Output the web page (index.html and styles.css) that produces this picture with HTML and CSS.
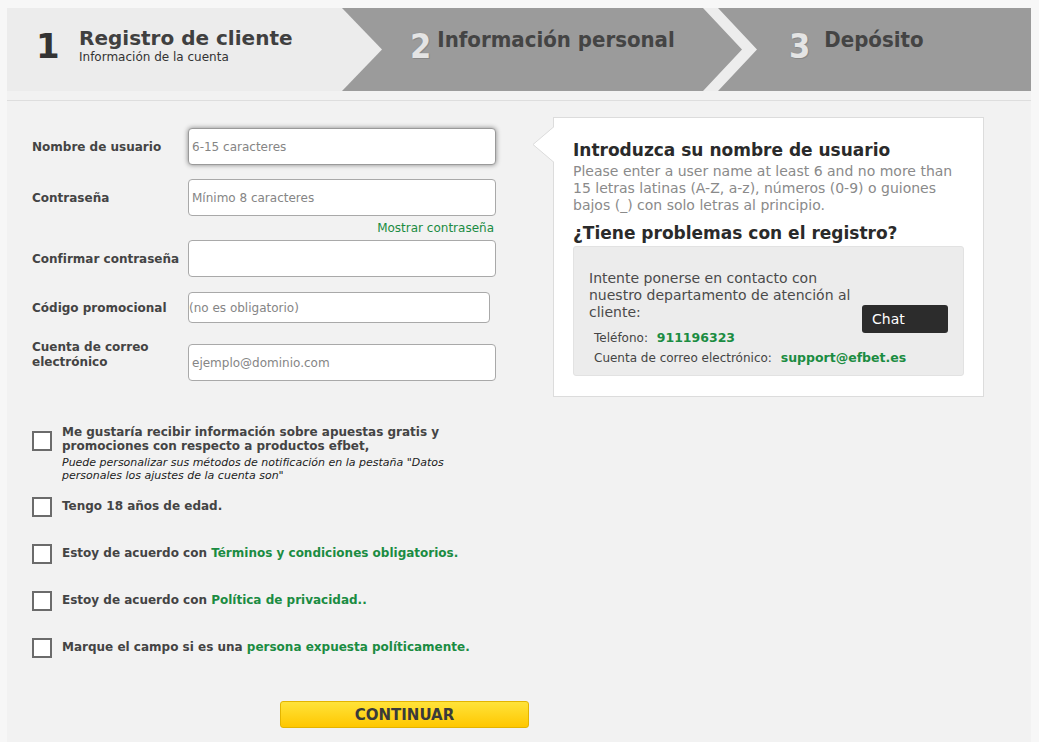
FILE: index.html
```html
<!DOCTYPE html>
<html lang="es">
<head>
<meta charset="utf-8">
<title>Registro de cliente</title>
<link rel="stylesheet" href="styles.css">
</head>
<body>
<div class="page">
  <header class="steps">
    <div class="step step1">
      <span class="num1">1</span>
      <div class="titles">
        <div class="title1">Registro de cliente</div>
        <div class="sub1">Información de la cuenta</div>
      </div>
    </div>
    <div class="step step2">
      <span class="numc">2</span>
      <span class="titlec">Información personal</span>
    </div>
    <svg class="sep" width="54" height="83" viewBox="0 0 54 83"><polygon points="0,0 15,0 54,41.5 15,83 0,83 39,41.5" fill="#ededed"/></svg>
    <div class="step step3">
      <span class="numc">3</span>
      <span class="titlec">Depósito</span>
    </div>
  </header>
  <div class="rule"></div>
  <main class="content">
    <div class="left">
      <form class="form">
        <div class="row r1">
          <label class="lbl">Nombre de usuario</label>
          <input class="inp focus" type="text" placeholder="6-15 caracteres">
        </div>
        <div class="row r2">
          <label class="lbl">Contraseña</label>
          <input class="inp" type="text" placeholder="Mínimo 8 caracteres">
        </div>
        <div class="show"><span class="link">Mostrar contraseña</span></div>
        <div class="row r3">
          <label class="lbl">Confirmar contraseña</label>
          <input class="inp" type="text">
        </div>
        <div class="row r4">
          <label class="lbl">Código promocional</label>
          <input class="inp short" type="text" placeholder="(no es obligatorio)">
        </div>
        <div class="row r5">
          <label class="lbl top">Cuenta de correo<br>electrónico</label>
          <input class="inp" type="text" placeholder="ejemplo@dominio.com">
        </div>
      </form>
      <div class="checks">
        <div class="cb first">
          <span class="box"></span>
          <div class="cbtext">
            <div>Me gustaría recibir información sobre apuestas gratis y<br>promociones con respecto a productos efbet,</div>
            <div class="note">Puede personalizar sus métodos de notificación en la pestaña "Datos<br>personales los ajustes de la cuenta son"</div>
          </div>
        </div>
        <div class="cb">
          <span class="box"></span>
          <div class="cbtext single">Tengo 18 años de edad.</div>
        </div>
        <div class="cb">
          <span class="box"></span>
          <div class="cbtext single">Estoy de acuerdo con <span class="link">Términos y condiciones obligatorios.</span></div>
        </div>
        <div class="cb">
          <span class="box"></span>
          <div class="cbtext single">Estoy de acuerdo con <span class="link">Política de privacidad..</span></div>
        </div>
        <div class="cb">
          <span class="box"></span>
          <div class="cbtext single">Marque el campo si es una <span class="link">persona expuesta políticamente.</span></div>
        </div>
      </div>
      <button class="continue" type="button">CONTINUAR</button>
    </div>
    <aside class="info">
      <svg class="pointer" width="22" height="36" viewBox="0 0 22 36"><polygon points="22,0 1,17.5 22,35" fill="#ffffff"/><polyline points="21.5,0 1,17.5 21.5,35" fill="none" stroke="#dcdcdc" stroke-width="1"/></svg>
      <h3 class="ih">Introduzca su nombre de usuario</h3>
      <p class="ip">Please enter a user name at least 6 and no more than<br>15 letras latinas (A-Z, a-z), números (0-9) o guiones<br>bajos (_) con solo letras al principio.</p>
      <h3 class="ih2">¿Tiene problemas con el registro?</h3>
      <div class="help">
        <div class="help-top">
          <p class="htext">Intente ponerse en contacto con<br>nuestro departamento de atención al<br>cliente:</p>
          <span class="chat">Chat</span>
        </div>
        <div class="cline first-line">Teléfono: <b class="green">911196323</b></div>
        <div class="cline">Cuenta de correo electrónico: <b class="green">support@efbet.es</b></div>
      </div>
    </aside>
  </main>
</div>
</body>
</html>
```

FILE: styles.css
```css
* { box-sizing: border-box; }
html, body { margin: 0; padding: 0; }
body {
  background: #f7f7f7;
  font-family: "DejaVu Sans", Verdana, sans-serif;
  color: #444;
}
.page {
  margin: 8px 0 0 7px;
  width: 1024px;
  min-height: 734px;
  background: #f2f2f2;
}
/* header steps */
.steps {
  display: flex;
  height: 83px;
  background: #9b9b9b;
}
.step1 {
  width: 375px;
  flex: none;
  background: #ececec;
  clip-path: polygon(0 0, 335px 0, 375px 50%, 335px 100%, 0 100%);
  display: flex;
  align-items: flex-start;
  padding: 19px 0 0 29px;
}
.num1 {
  font-weight: bold;
  font-size: 34px;
  line-height: 40px;
  margin-top: -1px;
  color: #333;
  width: 43px;
}
.title1 {
  font-weight: bold;
  font-size: 20px;
  line-height: 22px;
  color: #404040;
}
.sub1 {
  font-size: 12px;
  line-height: 14px;
  color: #333;
  margin-top: 1px;
}
.step2 {
  width: 321px;
  flex: none;
  display: flex;
  align-items: flex-start;
  padding: 14px 0 0 28px;
}
.step3 {
  flex: 1;
  display: flex;
  align-items: flex-start;
  padding: 14px 0 0 32px;
}
.sep { flex: none; display: block; }
.numc {
  font-family: "DejaVu Sans Condensed", "DejaVu Sans", sans-serif;
  font-stretch: condensed;
  font-weight: bold;
  font-size: 34px;
  line-height: 46px;
  margin-top: 1px;
  color: #e4e4e4;
  text-shadow: 0 0 1px #777, 1px 1px 0 #8a8a8a;
  margin-right: 6px;
}
.titlec {
  font-family: "DejaVu Sans Condensed", "DejaVu Sans", sans-serif;
  font-stretch: condensed;
  font-weight: bold;
  font-size: 22px;
  line-height: 36px;
  color: #444;
}
.step3 .numc { margin-right: 14px; }
.rule {
  margin-top: 9px;
  height: 1px;
  background: #dedede;
}
/* content */
.content {
  display: flex;
  align-items: flex-start;
}
.left {
  width: 522px;
  padding-left: 25px;
  padding-top: 27px;
  flex: none;
}
.form { width: 472px; }
.row {
  display: flex;
  align-items: center;
}
.lbl {
  width: 156px;
  flex: none;
  font-weight: bold;
  font-size: 12px;
  line-height: 15px;
  color: #444;
  padding-top: 2px;
}
.lbl.top {
  align-self: flex-start;
  margin-top: -4px;
  padding-top: 0;
}
.inp {
  width: 308px;
  height: 37px;
  border: 1px solid #a9a9a9;
  border-radius: 4px;
  background: #fff;
  padding: 0 3px;
  font-family: "DejaVu Sans", Verdana, sans-serif;
  font-size: 12px;
  color: #333;
  outline: none;
}
.inp::placeholder { color: #858585; opacity: 1; }
.inp.focus {
  border-color: #9a9a9a;
  box-shadow: 0 0 5px rgba(0,0,0,0.45);
}
.inp.short { width: 302px; height: 31px; padding-left: 0; }
.r2 { margin-top: 14px; }
.show {
  text-align: right;
  font-size: 12px;
  line-height: 24px;
  padding-right: 2px;
  width: 464px;
}
.r4 { margin-top: 15px; }
.r5 { margin-top: 21px; }
.link { color: #1b8c42; }
.green { color: #1b8c42; }
/* checkboxes */
.checks { margin-top: 44px; }
.cb {
  display: flex;
  align-items: center;
  gap: 10px;
  margin-top: 27px;
}
.cb.first { align-items: flex-start; margin-top: 0; }
.cb:nth-child(2) { margin-top: 15px; }
.box {
  width: 20px;
  height: 20px;
  flex: none;
  border: 2px solid #6b6b6b;
  background: #fff;
}
.cb.first .box { margin-top: 6px; }
.cbtext {
  font-weight: bold;
  font-size: 12px;
  line-height: 14px;
  color: #444;
  white-space: nowrap;
}
.cbtext.single { margin-top: -2px; }
.note {
  font-weight: normal;
  font-style: italic;
  font-size: 11px;
  line-height: 13px;
  color: #222;
  margin-top: 3px;
}
.continue {
  display: block;
  margin: 43px 0 0 248px;
  width: 249px;
  height: 27px;
  border: 1px solid #e3b400;
  border-radius: 3px;
  background: linear-gradient(#ffe33a, #ffc700);
  font-family: "DejaVu Sans", Verdana, sans-serif;
  font-weight: bold;
  font-size: 15px;
  color: #3a3a3a;
  padding: 0;
}
/* info */
.info {
  position: relative;
  margin-top: 16px;
  margin-left: 24px;
  width: 431px;
  flex: none;
  background: #fff;
  border: 1px solid #dcdcdc;
  padding: 22px 19px 20px 19px;
}
.pointer {
  position: absolute;
  left: -22px;
  top: 9px;
}
.ih, .ih2 {
  margin: 0;
  font-size: 17px;
  line-height: 21px;
  font-weight: bold;
  color: #2a2a2a;
}
.ip {
  margin: 2px 0 0;
  font-size: 14px;
  line-height: 17px;
  color: #8a8a8a;
  white-space: nowrap;
}
.ih2 { margin-top: 9px; }
.help {
  margin-top: 2px;
  background: #ececec;
  border: 1px solid #e2e2e2;
  border-radius: 3px;
  padding: 23px 15px 7px 15px;
}
.help-top {
  display: flex;
}
.htext {
  margin: 0;
  font-size: 14px;
  line-height: 17px;
  color: #4a4a4a;
  white-space: nowrap;
}
.chat {
  margin-left: auto;
  align-self: flex-end;
  margin-bottom: -12px;
  width: 86px;
  height: 28px;
  background: #2c2c2c;
  border-radius: 3px;
  color: #fff;
  font-size: 14px;
  line-height: 28px;
  padding-left: 10px;
}
.cline {
  font-size: 12px;
  line-height: 20px;
  color: #444;
  padding-left: 5px;
}
.cline.first-line { margin-top: 7px; }
.cline b { font-size: 12.5px; margin-left: 5px; }
```
